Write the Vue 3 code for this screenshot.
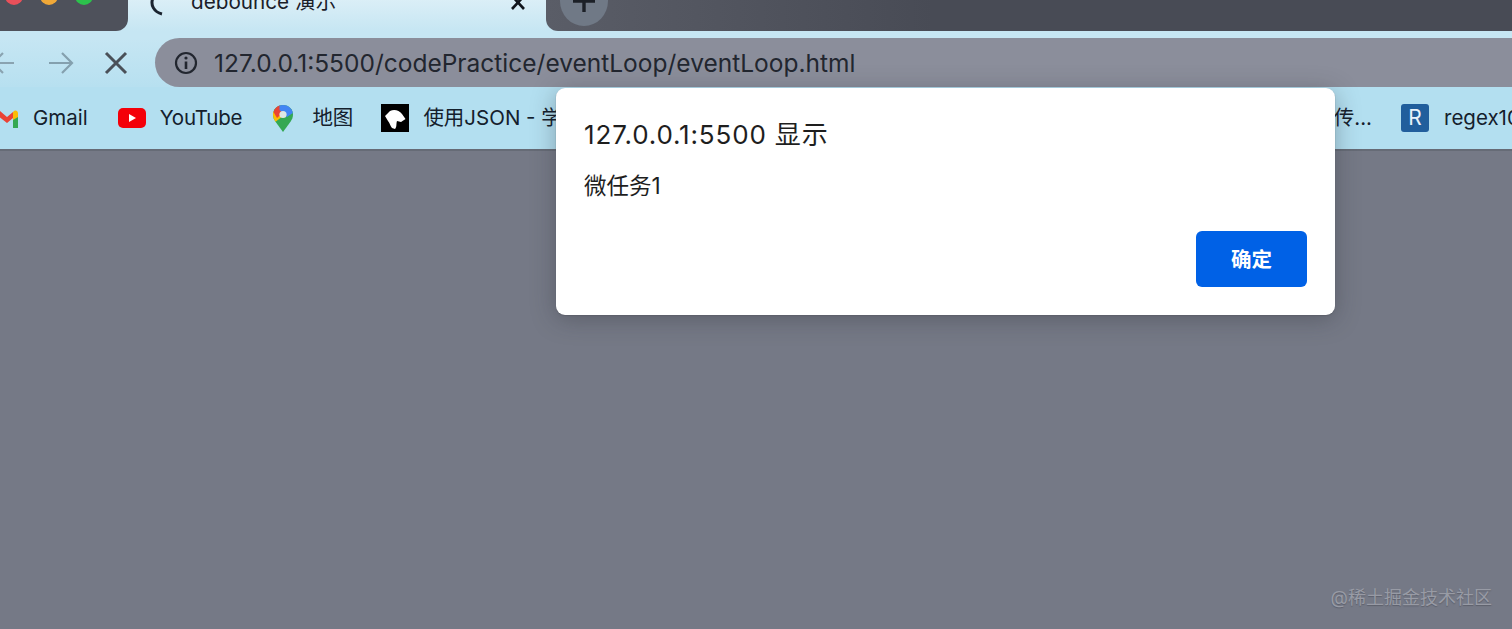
<script setup>
const bookmarks = [
  { name: 'Gmail', icon: 'gmail' },
  { name: 'YouTube', icon: 'youtube' },
  { name: '地图', icon: 'maps' },
]
</script>

<template>
  <div class="window">
    <div class="tab-strip">
      <div class="tab-left">
        <span class="light red"></span>
        <span class="light yellow"></span>
        <span class="light green"></span>
      </div>
      <div class="tab">
        <svg class="spinner" width="16" height="20" viewBox="0 0 16 20">
          <path d="M5 -2C2 5 6 12 14 14" fill="none" stroke="#1b2430" stroke-width="3" />
        </svg>
        <span class="tab-title">debounce 演示</span>
        <svg class="tab-close" width="16" height="16" viewBox="0 0 16 16">
          <path d="M2 1l12 13M14 1L2 14" stroke="#11151c" stroke-width="2.6" />
        </svg>
      </div>
      <div class="tab-right">
        <div class="new-tab">
          <svg width="24" height="24" viewBox="0 0 24 24">
            <path d="M12 1v22M1 12h22" stroke="#1c2027" stroke-width="3.4" />
          </svg>
        </div>
      </div>
    </div>

    <div class="toolbar">
      <svg class="nav-back" width="24" height="24" viewBox="0 0 24 24">
        <path d="M23 12H2M12 2L2 12l10 10" fill="none" stroke="#8aa3b0" stroke-width="2.2" />
      </svg>
      <svg class="nav-forward" width="26" height="24" viewBox="0 0 26 24">
        <path d="M1 12h23M14 2l10 10-10 10" fill="none" stroke="#84a0ae" stroke-width="2.2" />
      </svg>
      <svg class="nav-stop" width="24" height="24" viewBox="0 0 24 24">
        <path d="M2 2l20 20M22 2L2 22" stroke="#4a5058" stroke-width="3" />
      </svg>
      <div class="omnibox">
        <svg width="24" height="24" viewBox="0 0 24 24">
          <circle cx="12" cy="12" r="10" fill="none" stroke="#22262f" stroke-width="2.2" />
          <path d="M12 10.5V18" stroke="#22262f" stroke-width="2.6" />
          <circle cx="12" cy="7" r="1.6" fill="#22262f" />
        </svg>
        <span class="url">127.0.0.1:5500/codePractice/eventLoop/eventLoop.html</span>
      </div>
    </div>

    <div class="bookmarks">
      <div v-for="b in bookmarks" :key="b.name" class="bookmark" :class="'bm-' + b.icon">
        <svg v-if="b.icon === 'gmail'" width="22" height="19" viewBox="0 0 22 19">
          <path d="M3 1l8 7 6-5v6l-6 5-9-7z" fill="#ea4335" />
          <path d="M17 9l5-3v13h-5z" fill="#34a853" />
          <path d="M17 3c1.500-2.500 5-2 5 1.500V8l-5 3z" fill="#fbbc04" />
        </svg>
        <svg v-else-if="b.icon === 'youtube'" width="28" height="20" viewBox="0 0 28 20">
          <rect width="28" height="20" rx="5" fill="#f40009" />
          <path d="M11 6l7 4-7 4z" fill="#fff" />
        </svg>
        <svg v-else width="20" height="27" viewBox="0 0 20 27">
          <path d="M10 0C4 0 0 4.500 0 9.500c0 3 1 5 2.500 7.200L10 27l7.500-10.300C19 14.500 20 12.500 20 9.500 20 4.500 16 0 10 0z" fill="#34a853" />
          <path d="M2.500 16.700C1 14.500 0 12.500 0 9.500c0-1 .2-2 .5-3L10 11z" fill="#fbbc04" />
          <path d="M.5 7C1.500 3.500 4 1 7 .5L12 6 4 13z" fill="#ea4335" />
          <path d="M6.500.6C7.500.2 8.700 0 10 0c5 0 9 3.500 9.800 8L14 12 6.500 5z" fill="#4285f4" />
          <circle cx="10" cy="9.500" r="3.600" fill="#dfe7e4" />
        </svg>
        <span>{{ b.name }}</span>
      </div>

      <div class="bookmark bm-json">
        <svg width="28" height="28" viewBox="0 0 28 28">
          <rect width="28" height="28" fill="#000" />
          <path d="M4 12l5-5c4-2 9-1 12 3l3.500 5-4.500 3-4-1c-1 3 0 6-2 8l-3-1c-2-2-2-5-4-7z" fill="#fff" />
        </svg>
        <span>使用JSON - 学</span>
      </div>

      <div class="bookmark bm-more"><span>传...</span></div>

      <div class="bookmark bm-regex">
        <span class="regex-icon">R</span>
        <span>regex101.com</span>
      </div>
    </div>

    <div class="page">
      <span class="watermark">@稀土掘金技术社区</span>
    </div>

    <div class="dialog">
      <div class="dialog-title">127.0.0.1:5500 显示</div>
      <div class="dialog-msg">微任务1</div>
      <div class="dialog-actions">
        <button class="ok-btn">确定</button>
      </div>
    </div>
  </div>
</template>

<style>
html, body {
  margin: 0;
  background: #757986;
  overflow: hidden;
}
</style>

<style scoped>
.window {
  position: relative;
  width: 1512px;
  height: 629px;
  overflow: hidden;
  display: flex;
  flex-direction: column;
  font-family: Inter, "Noto Sans CJK SC", sans-serif;
}

.tab-strip {
  height: 31px;
  flex-shrink: 0;
  display: flex;
  background: #c6e6f3;
  overflow: hidden;
}

.tab-left {
  width: 128px;
  background: #4e515b;
  border-bottom-right-radius: 12px;
  display: flex;
  gap: 17px;
  padding-left: 5px;
  box-sizing: border-box;
  margin-top: -14px;
  padding-top: 1px;
}

.light {
  width: 18px;
  height: 18px;
  border-radius: 50%;
}
.red { background: #e9505a; }
.yellow { background: #f0a838; }
.green { background: #2cc14c; }

.tab {
  width: 418px;
  display: flex;
  align-items: flex-start;
  background: linear-gradient(#e3f2f8, #c6e6f3);
  color: #1a2029;
  font-size: 20.7px;
  margin-top: -13px;
}

.spinner {
  margin: 13px 0 0 20px;
  overflow: visible;
}

.tab-title {
  margin-left: 27px;
  padding-top: 3px;
  line-height: 24px;
  white-space: nowrap;
}

.tab-close {
  margin: 8px 20px 0 auto;
}

.tab-right {
  flex: 1;
  background: linear-gradient(90deg, #5a5d67, #484b55 40%);
  border-bottom-left-radius: 12px;
  padding-left: 14px;
  margin-top: -24px;
}

.new-tab {
  width: 48px;
  height: 50px;
  border-radius: 50%;
  background: #707986;
  display: flex;
  align-items: center;
  justify-content: center;
}

.toolbar {
  height: 56px;
  flex-shrink: 0;
  box-sizing: border-box;
  padding-top: 7px;
  display: flex;
  align-items: center;
  background: linear-gradient(#c6e6f3 0 7px, #b7e0f0);
}

.nav-back {
  margin-left: -9px;
  flex-shrink: 0;
}
.nav-forward {
  margin-left: 33px;
  flex-shrink: 0;
}
.nav-stop {
  margin-left: 30px;
  flex-shrink: 0;
}

.omnibox {
  flex: 1;
  height: 49px;
  margin-left: 27px;
  margin-right: -20px;
  border-radius: 25px 0 0 25px;
  background: #8b8e9b;
  display: flex;
  align-items: center;
  padding-left: 19px;
  gap: 16px;
}

.url {
  font-family: Inter, sans-serif;
  font-size: 24.5px;
  color: #22262f;
  white-space: nowrap;
}

.bookmarks {
  height: 64px;
  flex-shrink: 0;
  box-sizing: border-box;
  display: flex;
  align-items: center;
  background: #b3dff0;
  border-bottom: 2px solid #666b76;
  font-size: 20.5px;
  line-height: 22px;
  color: #14202c;
}

.bookmark {
  display: flex;
  align-items: center;
  gap: 15px;
  flex-shrink: 0;
  white-space: nowrap;
}

.bm-gmail {
  margin-left: -4px;
}
.bm-youtube {
  margin-left: 30px;
  gap: 14px;
}
.bm-youtube span {
  letter-spacing: -0.2px;
}
.bm-maps {
  margin-left: 31px;
  gap: 19px;
}
.bm-json {
  margin-left: 28px;
  flex: 1;
  gap: 14px;
}
.bm-more {
  margin-right: 29px;
}

.regex-icon {
  width: 28px;
  height: 28px;
  flex-shrink: 0;
  border-radius: 3px;
  background: #215e9c;
  color: #e8f2fa;
  display: flex;
  align-items: center;
  justify-content: center;
  font-size: 21px;
}

.bm-regex {
  width: 111px;
}

.page {
  flex: 1;
  background: #757986;
  display: flex;
  align-items: flex-end;
  justify-content: flex-end;
  padding: 0 20px 19px 0;
}

.watermark {
  font-size: 18px;
  line-height: 24px;
  color: #989ba5;
  text-shadow: 0 1px 1px #5c5f6b;
}

.dialog {
  position: absolute;
  left: 556px;
  top: 88px;
  width: 779px;
  height: 227px;
  box-sizing: border-box;
  padding: 32px 28px 28px;
  background: #fff;
  border-radius: 9px;
  box-shadow: 0 1px 1px #5d606b, 0 4px 24px rgba(40, 42, 50, 0.35);
  display: flex;
  flex-direction: column;
  color: #1e1e1e;
}

.dialog-title {
  font-size: 26px;
  line-height: 30px;
  letter-spacing: 0.85px;
}

.dialog-msg {
  font-size: 22.5px;
  line-height: 28px;
  margin-top: 22px;
}

.dialog-actions {
  margin-top: auto;
  display: flex;
  justify-content: flex-end;
}

.ok-btn {
  width: 111px;
  height: 56px;
  border: none;
  border-radius: 6px;
  padding-bottom: 4px;
  background: #0061e6;
  color: #fff;
  font-family: inherit;
  font-size: 20.5px;
  font-weight: 700;
}
</style>
